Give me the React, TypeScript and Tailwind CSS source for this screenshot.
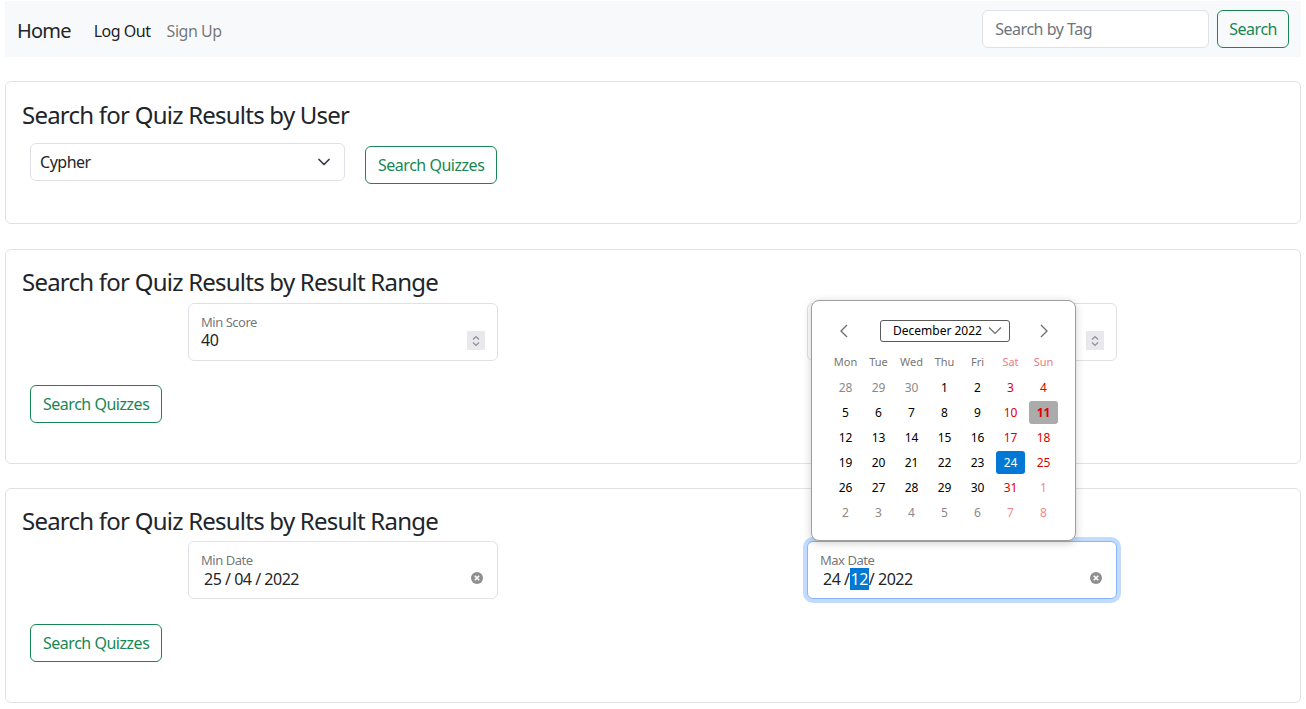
const font = { fontFamily: '"Noto Sans", "Open Sans", sans-serif' };

const Spinner = () => (
    <span className="absolute right-[13px] top-[28px] w-[18px] h-[19px] bg-[#e9e9ed] flex items-center justify-center">
        <svg width="10" height="14" viewBox="0 0 10 14" fill="none" stroke="#8d8d96" strokeWidth="1.2">
            <path d="M2 5.5 5 2.5 8 5.5" />
            <path d="M2 8.5 5 11.5 8 8.5" />
        </svg>
    </span>
);

const ClearIcon = () => (
    <svg className="absolute right-[15px] top-[31px]" width="12" height="12" viewBox="0 0 12 12">
        <circle cx="6" cy="6" r="6" fill="#8f8f8f" />
        <path d="M3.8 3.8 8.2 8.2M8.2 3.8 3.8 8.2" stroke="#fff" strokeWidth="1.6" />
    </svg>
);

const FloatingField = ({
    label,
    children,
    focused = false,
}: {
    label: string;
    children: React.ReactNode;
    focused?: boolean;
}) => (
    <div
        className={
            focused
                ? "relative h-[58px] rounded-md border border-[#86b7fe] ring-4 ring-[#0d6efd]/25 bg-white"
                : "relative h-[58px] rounded-md border border-[#dee2e6] bg-white"
        }
    >
        <div className="absolute left-[12px] top-[10px] text-[13px] leading-[16px] text-[#212529]/65">{label}</div>
        <div className="absolute left-[12px] top-[24px] text-[16px] leading-[24px] text-[#212529]">{children}</div>
    </div>
);

const SearchQuizzes = ({ className = "" }: { className?: string }) => (
    <button
        className={
            "h-[38px] px-[12px] rounded-md border border-[#198754] text-[#198754] text-[16px] bg-white " + className
        }
    >
        Search Quizzes
    </button>
);

type Day = { d: number; muted?: boolean };

const weeks: Day[][] = [
    [{ d: 28, muted: true }, { d: 29, muted: true }, { d: 30, muted: true }, { d: 1 }, { d: 2 }, { d: 3 }, { d: 4 }],
    [{ d: 5 }, { d: 6 }, { d: 7 }, { d: 8 }, { d: 9 }, { d: 10 }, { d: 11 }],
    [{ d: 12 }, { d: 13 }, { d: 14 }, { d: 15 }, { d: 16 }, { d: 17 }, { d: 18 }],
    [{ d: 19 }, { d: 20 }, { d: 21 }, { d: 22 }, { d: 23 }, { d: 24 }, { d: 25 }],
    [{ d: 26 }, { d: 27 }, { d: 28 }, { d: 29 }, { d: 30 }, { d: 31 }, { d: 1, muted: true }],
    [
        { d: 2, muted: true },
        { d: 3, muted: true },
        { d: 4, muted: true },
        { d: 5, muted: true },
        { d: 6, muted: true },
        { d: 7, muted: true },
        { d: 8, muted: true },
    ],
];

const dayClass = (day: Day, col: number) => {
    if (day.d === 11 && !day.muted) return "bg-[#ababab] text-[#e00000] font-bold";
    if (day.d === 24 && !day.muted) return "bg-[#0078d4] text-white";
    const weekend = col >= 5;
    if (day.muted) return weekend ? "text-[#f08a8a]" : "text-[#8a8a8a]";
    return weekend ? "text-[#e00000]" : "text-black";
};

const Calendar = () => (
    <div className="absolute left-[4px] bottom-full w-[265px] h-[241px] bg-white border border-[#9e9e9e] rounded-lg shadow-[0_2px_8px_rgba(0,0,0,0.2)] z-10 px-[17px] pt-[19px] tracking-normal">
        <div className="relative h-[22px]">
            <svg className="absolute left-[10px] top-[4px]" width="10" height="14" viewBox="0 0 10 14" fill="none" stroke="#6b6b6b" strokeWidth="1.3">
                <path d="M8 1 2 7 8 13" />
            </svg>
            <div className="absolute left-[51px] top-0 w-[130px] h-[22px] border border-[#5a5a5a] rounded-[3px] flex items-center pl-[12px] text-[12px] text-black">
                December 2022
                <svg className="absolute right-[7px] top-[5px]" width="14" height="9" viewBox="0 0 14 9" fill="none" stroke="#6b6b6b" strokeWidth="1.2">
                    <path d="M1 1.5 7 7.5 13 1.5" />
                </svg>
            </div>
            <svg className="absolute left-[210px] top-[4px]" width="10" height="14" viewBox="0 0 10 14" fill="none" stroke="#6b6b6b" strokeWidth="1.3">
                <path d="M2 1 8 7 2 13" />
            </svg>
        </div>
        <div className="grid grid-cols-[repeat(7,33px)] mt-[8px] text-[11px]">
            {["Mon", "Tue", "Wed", "Thu", "Fri", "Sat", "Sun"].map((h, i) => (
                <div key={h} className={"h-[25px] flex items-center justify-center " + (i >= 5 ? "text-[#ec7b84]" : "text-[#777777]")}>
                    {h}
                </div>
            ))}
            {weeks.map((w, r) =>
                w.map((day, c) => (
                    <div key={r + "-" + c} className="h-[25px] flex items-center justify-center">
                        <span className={"w-[29px] h-[23px] rounded-[3px] flex items-center justify-center text-[12px] " + dayClass(day, c)}>
                            {day.d}
                        </span>
                    </div>
                ))
            )}
        </div>
    </div>
);

const App = () => {
    return (
        <div className="min-h-screen bg-white px-[5px] pt-[1px] text-[#212529] tracking-[-0.03em]" style={font}>
            <nav className="h-[56px] bg-[#f8f9fa] flex items-center pl-[12px] pr-[12px]">
                <span className="text-[20px] mr-[23px] mt-[3px] tracking-[-0.04em]">Home</span>
                <span className="text-[16px] text-black/90 mr-[16px] mt-[3px]">Log Out</span>
                <span className="text-[16px] text-black/55 mt-[3px]">Sign Up</span>
                <div className="ml-auto flex items-center gap-[8px]">
                    <input
                        className="w-[227px] h-[38px] px-[12px] rounded-md border border-[#dee2e6] bg-white text-[16px] tracking-[-0.03em] placeholder:text-[#6c757d]"
                        placeholder="Search by Tag"
                        style={font}
                    />
                    <button className="h-[38px] px-[11px] rounded-md border border-[#198754] text-[#198754] text-[16px]">
                        Search
                    </button>
                </div>
            </nav>

            <div className="mt-[24px] border border-[#dee2e6] rounded-md px-[16px] pt-[18px] pb-[39px]">
                <h4 className="text-[24px] leading-[29px] font-normal tracking-[-0.032em]">Search for Quiz Results by User</h4>
                <div className="flex items-start mt-[14px] ml-[8px]">
                    <div className="relative w-[315px] h-[38px] rounded-md border border-[#dee2e6] flex items-center pl-[9px] text-[16px]">
                        Cypher
                        <svg className="absolute right-[13px] top-[13px]" width="14" height="10" viewBox="0 0 16 12" fill="none" stroke="#343a40" strokeWidth="2" strokeLinecap="round" strokeLinejoin="round">
                            <path d="m2 3 6 6 6-6" />
                        </svg>
                    </div>
                    <SearchQuizzes className="ml-[20px] mt-[3px]" />
                </div>
            </div>

            <div className="mt-[25px] border border-[#dee2e6] rounded-md px-[16px] pt-[17px] pb-[40px]">
                <h4 className="text-[24px] leading-[29px] font-normal tracking-[-0.032em]">Search for Quiz Results by Result Range</h4>
                <div className="grid grid-cols-[310px_310px] gap-x-[309px] ml-[166px] mt-[7px]">
                    <div className="relative">
                        <FloatingField label="Min Score">40</FloatingField>
                        <Spinner />
                    </div>
                    <div className="relative">
                        <FloatingField label="Max Score">100</FloatingField>
                        <Spinner />
                    </div>
                </div>
                <SearchQuizzes className="ml-[8px] mt-[24px]" />
            </div>

            <div className="mt-[24px] border border-[#dee2e6] rounded-md px-[16px] pt-[17px] pb-[40px]">
                <h4 className="text-[24px] leading-[29px] font-normal tracking-[-0.032em]">Search for Quiz Results by Result Range</h4>
                <div className="grid grid-cols-[310px_310px] gap-x-[309px] ml-[166px] mt-[6px]">
                    <div className="relative">
                        <FloatingField label="Min Date">
                            <span className="block pl-[3px] pt-[1px]">25 / 04 / 2022</span>
                        </FloatingField>
                        <ClearIcon />
                    </div>
                    <div className="relative">
                        <FloatingField label="Max Date" focused>
                            <span className="block pl-[3px] pt-[1px]">
                                24 /<span className="bg-[#0078d4] text-white px-[1px]">12</span>/ 2022
                            </span>
                        </FloatingField>
                        <ClearIcon />
                        <Calendar />
                    </div>
                </div>
                <SearchQuizzes className="ml-[8px] mt-[25px]" />
            </div>
        </div>
    );
};

export default App;
